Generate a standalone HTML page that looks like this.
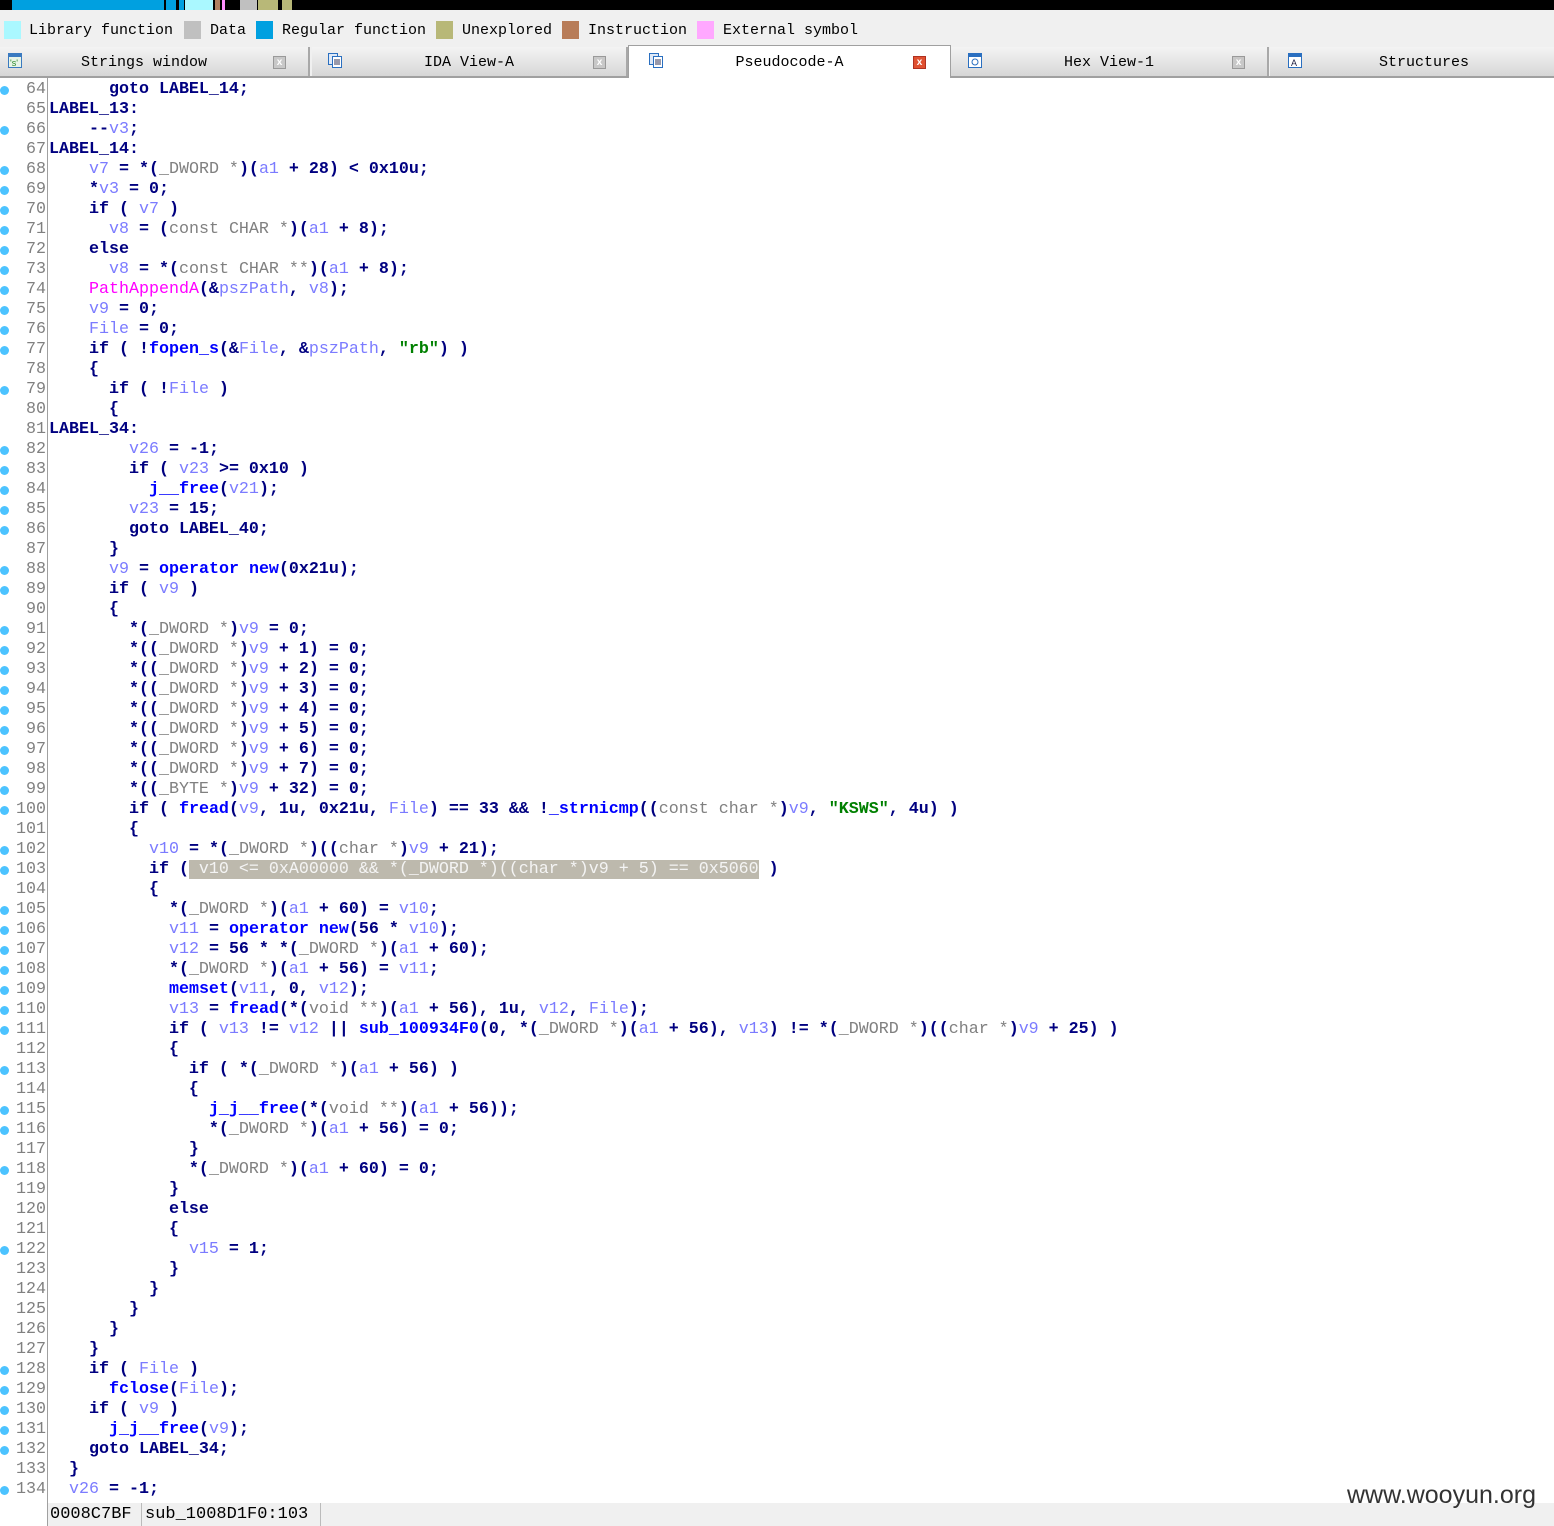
<!DOCTYPE html>
<html><head><meta charset="utf-8"><style>
*{margin:0;padding:0;box-sizing:border-box}
body{width:1554px;height:1526px;background:#fff;position:relative;overflow:hidden;font-family:"Liberation Mono","Noto Sans CJK SC",monospace}
#top{position:absolute;left:0;top:0;width:1554px;height:10px;background:#000}
#top div{position:absolute;top:0;height:10px}
#legend{position:absolute;left:0;top:10px;width:1554px;height:36px;background:#f0f0f0;font-size:15px;color:#000}
#legend span.sw{position:absolute;top:11px;width:17px;height:18px}
#legend span.t{position:absolute;top:12px;white-space:pre}
#tabs{position:absolute;left:0;top:46px;width:1554px;height:32px;background:#f0f0f0;border-bottom:2px solid #a0a0a0}
.tab{position:absolute;top:1px;height:29px;background:linear-gradient(#f4f4f4,#d6d6d6);border-right:2px solid #a8a8a8;font-family:"Liberation Mono","Noto Serif CJK SC",monospace;font-size:15px;color:#000}
.tab.act{background:#fff;top:-1px;height:33px;border:1px solid #a0a0a0;border-bottom:none}
.tab .lbl{position:absolute;top:7px;left:0;width:100%;text-align:center;white-space:pre}
.tab .ic{position:absolute;left:8px;top:6px;width:14px;height:15px}
.tab .x{position:absolute;top:9px;width:13px;height:13px;background:#c8c8c8;border:1px solid #999;color:#fff;font-size:10px;line-height:11px;text-align:center;font-family:"Liberation Sans",sans-serif;font-weight:bold}
#gutline{position:absolute;left:47px;top:78px;width:1px;height:1448px;background:#a0a0a0}
#code{position:absolute;left:0;top:80px;width:1554px}
.l{height:20px;position:relative;font-size:16.67px;line-height:20px;white-space:pre;color:#000080;font-weight:bold}
.l .n{position:absolute;left:0;width:46px;text-align:right;color:#808080;font-weight:normal}
.l .d{position:absolute;left:0;top:6px;width:9px;height:9px;border-radius:50%;background:#4cc3ff}
.l .c{position:absolute;left:49px}
.v{color:#7b7bff;font-weight:normal}
.g{color:#808080;font-weight:normal}
.f{color:#0000ff}
.m{color:#ff00ff;font-weight:normal}
.s{color:#008000}
.hl{background:#bdb9ad;color:#f4f4f4;font-weight:normal}
#status{position:absolute;left:48px;top:1503px;width:1506px;height:23px;background:#f0f0f0;font-family:"Liberation Mono",monospace;font-size:17px;color:#000}
#status span{position:absolute;top:2px;white-space:pre}
#wm{position:absolute;left:1347px;top:1481px;font-family:"Liberation Sans",sans-serif;font-size:25px;color:#333}
</style></head><body>
<div id="top">
<div style="left:12px;width:152px;background:#00a0e0"></div>
<div style="left:166px;width:10px;background:#00a0e0"></div>
<div style="left:179px;width:5px;background:#00a0e0"></div>
<div style="left:185px;width:28px;background:#aaf8ff"></div>
<div style="left:215px;width:5px;background:#b08060"></div>
<div style="left:222px;width:3px;background:#ff90ff"></div>
<div style="left:240px;width:17px;background:#c0c0c0"></div>
<div style="left:258px;width:20px;background:#b8b878"></div>
<div style="left:282px;width:10px;background:#b8b878"></div>
</div>
<div id="legend">
<span class="sw" style="left:4px;background:#aaf8ff"></span><span class="t" style="left:29px">Library function</span>
<span class="sw" style="left:184px;background:#c0c0c0"></span><span class="t" style="left:210px">Data</span>
<span class="sw" style="left:256px;background:#00a0e0"></span><span class="t" style="left:282px">Regular function</span>
<span class="sw" style="left:436px;background:#b8b878"></span><span class="t" style="left:462px">Unexplored</span>
<span class="sw" style="left:562px;background:#b87c58"></span><span class="t" style="left:588px">Instruction</span>
<span class="sw" style="left:697px;background:#ffa8ff"></span><span class="t" style="left:723px">External symbol</span>
</div>
<div id="tabs">
<div class="tab" style="left:0;width:310px"><svg class="ic" viewBox="0 0 14 15"><rect x="0.5" y="0.5" width="13" height="14" fill="#e8f4e8" stroke="#3a7ac0"/><rect x="1" y="1" width="12" height="3" fill="#3a7ac0"/><text x="2" y="13" font-size="9" fill="#2a8a2a" font-family="Liberation Sans">'s'</text></svg><span class="lbl" style="left:-10px">Strings window</span><span class="x" style="left:273px">x</span></div>
<div class="tab" style="left:312px;width:316px"><svg class="ic" style="left:16px" viewBox="0 0 14 15"><rect x="0.5" y="0.5" width="9" height="11" fill="#dfe9f7" stroke="#2a6fc0"/><rect x="4.5" y="3.5" width="9" height="11" fill="#fff" stroke="#2a6fc0"/><path d="M6 7h6M6 9h6M6 11h6" stroke="#335"/></svg><span class="lbl">IDA View-A</span><span class="x" style="left:281px">x</span></div>
<div class="tab act" style="left:628px;width:323px"><svg class="ic" style="left:20px;top:7px" viewBox="0 0 14 15"><rect x="0.5" y="0.5" width="9" height="11" fill="#dfe9f7" stroke="#2a6fc0"/><rect x="4.5" y="3.5" width="9" height="11" fill="#fff" stroke="#2a6fc0"/><path d="M6 7h6M6 9h6M6 11h6" stroke="#335"/></svg><span class="lbl" style="top:8px">Pseudocode-A</span><span class="x" style="left:284px;top:10px;background:#e05030;border-color:#b03020">x</span></div>
<div class="tab" style="left:951px;width:318px"><svg class="ic" style="left:17px" viewBox="0 0 14 15"><rect x="0.5" y="0.5" width="13" height="14" fill="#fff" stroke="#2a6fc0"/><rect x="1" y="1" width="12" height="3" fill="#2a6fc0"/><circle cx="7" cy="9" r="3" fill="none" stroke="#2a6fc0"/></svg><span class="lbl">Hex View-1</span><span class="x" style="left:281px">x</span></div>
<div class="tab" style="left:1270px;width:290px"><svg class="ic" style="left:18px" viewBox="0 0 14 15"><rect x="0.5" y="0.5" width="13" height="14" fill="#fff" stroke="#2a6fc0"/><rect x="1" y="1" width="12" height="3" fill="#2a6fc0"/><text x="3" y="13" font-size="9" fill="#224" font-family="Liberation Sans">A</text></svg><span class="lbl" style="left:10px">Structures</span></div>
</div>
<div id="gutline"></div>
<div id="code">
<div class="l"><i class="d"></i><span class="n"> 64</span><span class="c">      goto LABEL_14;</span></div>
<div class="l"><span class="n"> 65</span><span class="c">LABEL_13:</span></div>
<div class="l"><i class="d"></i><span class="n"> 66</span><span class="c">    --<span class="v">v3</span>;</span></div>
<div class="l"><span class="n"> 67</span><span class="c">LABEL_14:</span></div>
<div class="l"><i class="d"></i><span class="n"> 68</span><span class="c">    <span class="v">v7</span> = *(<span class="g">_DWORD *</span>)(<span class="v">a1</span> + 28) &lt; 0x10u;</span></div>
<div class="l"><i class="d"></i><span class="n"> 69</span><span class="c">    *<span class="v">v3</span> = 0;</span></div>
<div class="l"><i class="d"></i><span class="n"> 70</span><span class="c">    if ( <span class="v">v7</span> )</span></div>
<div class="l"><i class="d"></i><span class="n"> 71</span><span class="c">      <span class="v">v8</span> = (<span class="g">const CHAR *</span>)(<span class="v">a1</span> + 8);</span></div>
<div class="l"><i class="d"></i><span class="n"> 72</span><span class="c">    else</span></div>
<div class="l"><i class="d"></i><span class="n"> 73</span><span class="c">      <span class="v">v8</span> = *(<span class="g">const CHAR **</span>)(<span class="v">a1</span> + 8);</span></div>
<div class="l"><i class="d"></i><span class="n"> 74</span><span class="c">    <span class="m">PathAppendA</span>(&amp;<span class="v">pszPath</span>, <span class="v">v8</span>);</span></div>
<div class="l"><i class="d"></i><span class="n"> 75</span><span class="c">    <span class="v">v9</span> = 0;</span></div>
<div class="l"><i class="d"></i><span class="n"> 76</span><span class="c">    <span class="v">File</span> = 0;</span></div>
<div class="l"><i class="d"></i><span class="n"> 77</span><span class="c">    if ( !<span class="f">fopen_s</span>(&amp;<span class="v">File</span>, &amp;<span class="v">pszPath</span>, <span class="s">"rb"</span>) )</span></div>
<div class="l"><span class="n"> 78</span><span class="c">    {</span></div>
<div class="l"><i class="d"></i><span class="n"> 79</span><span class="c">      if ( !<span class="v">File</span> )</span></div>
<div class="l"><span class="n"> 80</span><span class="c">      {</span></div>
<div class="l"><span class="n"> 81</span><span class="c">LABEL_34:</span></div>
<div class="l"><i class="d"></i><span class="n"> 82</span><span class="c">        <span class="v">v26</span> = -1;</span></div>
<div class="l"><i class="d"></i><span class="n"> 83</span><span class="c">        if ( <span class="v">v23</span> &gt;= 0x10 )</span></div>
<div class="l"><i class="d"></i><span class="n"> 84</span><span class="c">          <span class="f">j__free</span>(<span class="v">v21</span>);</span></div>
<div class="l"><i class="d"></i><span class="n"> 85</span><span class="c">        <span class="v">v23</span> = 15;</span></div>
<div class="l"><i class="d"></i><span class="n"> 86</span><span class="c">        goto LABEL_40;</span></div>
<div class="l"><span class="n"> 87</span><span class="c">      }</span></div>
<div class="l"><i class="d"></i><span class="n"> 88</span><span class="c">      <span class="v">v9</span> = <span class="f">operator new</span>(0x21u);</span></div>
<div class="l"><i class="d"></i><span class="n"> 89</span><span class="c">      if ( <span class="v">v9</span> )</span></div>
<div class="l"><span class="n"> 90</span><span class="c">      {</span></div>
<div class="l"><i class="d"></i><span class="n"> 91</span><span class="c">        *(<span class="g">_DWORD *</span>)<span class="v">v9</span> = 0;</span></div>
<div class="l"><i class="d"></i><span class="n"> 92</span><span class="c">        *((<span class="g">_DWORD *</span>)<span class="v">v9</span> + 1) = 0;</span></div>
<div class="l"><i class="d"></i><span class="n"> 93</span><span class="c">        *((<span class="g">_DWORD *</span>)<span class="v">v9</span> + 2) = 0;</span></div>
<div class="l"><i class="d"></i><span class="n"> 94</span><span class="c">        *((<span class="g">_DWORD *</span>)<span class="v">v9</span> + 3) = 0;</span></div>
<div class="l"><i class="d"></i><span class="n"> 95</span><span class="c">        *((<span class="g">_DWORD *</span>)<span class="v">v9</span> + 4) = 0;</span></div>
<div class="l"><i class="d"></i><span class="n"> 96</span><span class="c">        *((<span class="g">_DWORD *</span>)<span class="v">v9</span> + 5) = 0;</span></div>
<div class="l"><i class="d"></i><span class="n"> 97</span><span class="c">        *((<span class="g">_DWORD *</span>)<span class="v">v9</span> + 6) = 0;</span></div>
<div class="l"><i class="d"></i><span class="n"> 98</span><span class="c">        *((<span class="g">_DWORD *</span>)<span class="v">v9</span> + 7) = 0;</span></div>
<div class="l"><i class="d"></i><span class="n"> 99</span><span class="c">        *((<span class="g">_BYTE *</span>)<span class="v">v9</span> + 32) = 0;</span></div>
<div class="l"><i class="d"></i><span class="n">100</span><span class="c">        if ( <span class="f">fread</span>(<span class="v">v9</span>, 1u, 0x21u, <span class="v">File</span>) == 33 &amp;&amp; !<span class="f">_strnicmp</span>((<span class="g">const char *</span>)<span class="v">v9</span>, <span class="s">"KSWS"</span>, 4u) )</span></div>
<div class="l"><span class="n">101</span><span class="c">        {</span></div>
<div class="l"><i class="d"></i><span class="n">102</span><span class="c">          <span class="v">v10</span> = *(<span class="g">_DWORD *</span>)((<span class="g">char *</span>)<span class="v">v9</span> + 21);</span></div>
<div class="l"><i class="d"></i><span class="n">103</span><span class="c">          if (<span class="hl"> v10 &lt;= 0xA00000 &amp;&amp; *(_DWORD *)((char *)v9 + 5) == 0x5060</span> )</span></div>
<div class="l"><span class="n">104</span><span class="c">          {</span></div>
<div class="l"><i class="d"></i><span class="n">105</span><span class="c">            *(<span class="g">_DWORD *</span>)(<span class="v">a1</span> + 60) = <span class="v">v10</span>;</span></div>
<div class="l"><i class="d"></i><span class="n">106</span><span class="c">            <span class="v">v11</span> = <span class="f">operator new</span>(56 * <span class="v">v10</span>);</span></div>
<div class="l"><i class="d"></i><span class="n">107</span><span class="c">            <span class="v">v12</span> = 56 * *(<span class="g">_DWORD *</span>)(<span class="v">a1</span> + 60);</span></div>
<div class="l"><i class="d"></i><span class="n">108</span><span class="c">            *(<span class="g">_DWORD *</span>)(<span class="v">a1</span> + 56) = <span class="v">v11</span>;</span></div>
<div class="l"><i class="d"></i><span class="n">109</span><span class="c">            <span class="f">memset</span>(<span class="v">v11</span>, 0, <span class="v">v12</span>);</span></div>
<div class="l"><i class="d"></i><span class="n">110</span><span class="c">            <span class="v">v13</span> = <span class="f">fread</span>(*(<span class="g">void **</span>)(<span class="v">a1</span> + 56), 1u, <span class="v">v12</span>, <span class="v">File</span>);</span></div>
<div class="l"><i class="d"></i><span class="n">111</span><span class="c">            if ( <span class="v">v13</span> != <span class="v">v12</span> || <span class="f">sub_100934F0</span>(0, *(<span class="g">_DWORD *</span>)(<span class="v">a1</span> + 56), <span class="v">v13</span>) != *(<span class="g">_DWORD *</span>)((<span class="g">char *</span>)<span class="v">v9</span> + 25) )</span></div>
<div class="l"><span class="n">112</span><span class="c">            {</span></div>
<div class="l"><i class="d"></i><span class="n">113</span><span class="c">              if ( *(<span class="g">_DWORD *</span>)(<span class="v">a1</span> + 56) )</span></div>
<div class="l"><span class="n">114</span><span class="c">              {</span></div>
<div class="l"><i class="d"></i><span class="n">115</span><span class="c">                <span class="f">j_j__free</span>(*(<span class="g">void **</span>)(<span class="v">a1</span> + 56));</span></div>
<div class="l"><i class="d"></i><span class="n">116</span><span class="c">                *(<span class="g">_DWORD *</span>)(<span class="v">a1</span> + 56) = 0;</span></div>
<div class="l"><span class="n">117</span><span class="c">              }</span></div>
<div class="l"><i class="d"></i><span class="n">118</span><span class="c">              *(<span class="g">_DWORD *</span>)(<span class="v">a1</span> + 60) = 0;</span></div>
<div class="l"><span class="n">119</span><span class="c">            }</span></div>
<div class="l"><span class="n">120</span><span class="c">            else</span></div>
<div class="l"><span class="n">121</span><span class="c">            {</span></div>
<div class="l"><i class="d"></i><span class="n">122</span><span class="c">              <span class="v">v15</span> = 1;</span></div>
<div class="l"><span class="n">123</span><span class="c">            }</span></div>
<div class="l"><span class="n">124</span><span class="c">          }</span></div>
<div class="l"><span class="n">125</span><span class="c">        }</span></div>
<div class="l"><span class="n">126</span><span class="c">      }</span></div>
<div class="l"><span class="n">127</span><span class="c">    }</span></div>
<div class="l"><i class="d"></i><span class="n">128</span><span class="c">    if ( <span class="v">File</span> )</span></div>
<div class="l"><i class="d"></i><span class="n">129</span><span class="c">      <span class="f">fclose</span>(<span class="v">File</span>);</span></div>
<div class="l"><i class="d"></i><span class="n">130</span><span class="c">    if ( <span class="v">v9</span> )</span></div>
<div class="l"><i class="d"></i><span class="n">131</span><span class="c">      <span class="f">j_j__free</span>(<span class="v">v9</span>);</span></div>
<div class="l"><i class="d"></i><span class="n">132</span><span class="c">    goto LABEL_34;</span></div>
<div class="l"><span class="n">133</span><span class="c">  }</span></div>
<div class="l"><i class="d"></i><span class="n">134</span><span class="c">  <span class="v">v26</span> = -1;</span></div>
</div>
<div id="status"><span style="left:2px">0008C7BF</span><span style="left:93px;top:0;width:1px;height:23px;background:#bbb"></span><span style="left:97px">sub_1008D1F0:103</span><span style="left:272px;top:0;width:1px;height:23px;background:#bbb"></span></div>
<div id="wm">www.wooyun.org</div>
</body></html>
